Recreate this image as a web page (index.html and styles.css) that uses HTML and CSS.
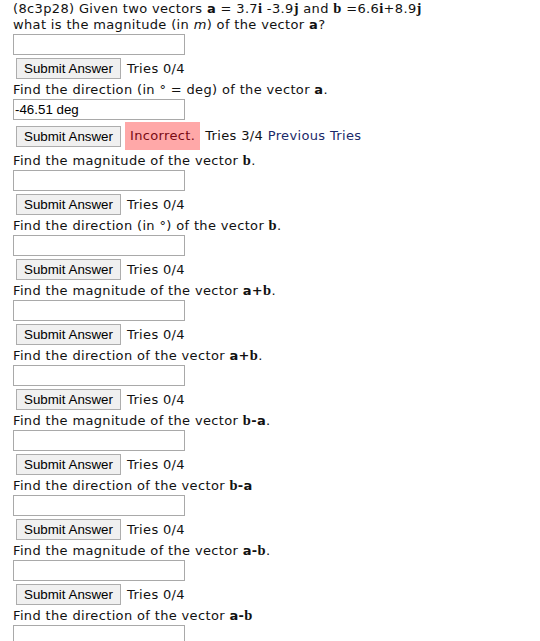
FILE: index.html
```html
<!DOCTYPE html>
<html>
<head>
<meta charset="utf-8">
<link rel="stylesheet" href="styles.css">
</head>
<body>
<div class="page">
  <div class="block">
    <p class="q">(8c3p28) Given two vectors <b class="sa">a</b> = 3.7<b class="sr">i</b> -3.9<b class="sr">j</b> and <b class="sr">b</b> =6.6<b class="sr">i</b>+8.9<b class="sr">j</b></p>
    <p class="q">what is the magnitude (in <i>m</i>) of the vector <b class="sa">a</b>?</p>
    <div class="field"></div>
    <div class="row"><span class="btn">Submit Answer</span><span class="tries">Tries 0/4</span></div>
  </div>
  <div class="block">
    <p class="q">Find the direction (in ° = deg) of the vector <b class="sa">a</b>.</p>
    <div class="field">-46.51 deg</div>
    <div class="row row-bad"><span class="btn">Submit Answer</span><span class="bad">Incorrect.</span><span class="tries tries-after">Tries 3/4 <span class="prev">Previous Tries</span></span></div>
  </div>
  <div class="block">
    <p class="q">Find the magnitude of the vector <b class="sr">b</b>.</p>
    <div class="field"></div>
    <div class="row"><span class="btn">Submit Answer</span><span class="tries">Tries 0/4</span></div>
  </div>
  <div class="block">
    <p class="q">Find the direction (in °) of the vector <b class="sr">b</b>.</p>
    <div class="field"></div>
    <div class="row"><span class="btn">Submit Answer</span><span class="tries">Tries 0/4</span></div>
  </div>
  <div class="block">
    <p class="q">Find the magnitude of the vector <b class="sa">a</b><b class="sa">+</b><b class="sr">b</b>.</p>
    <div class="field"></div>
    <div class="row"><span class="btn">Submit Answer</span><span class="tries">Tries 0/4</span></div>
  </div>
  <div class="block">
    <p class="q">Find the direction of the vector <b class="sa">a</b><b class="sa">+</b><b class="sr">b</b>.</p>
    <div class="field"></div>
    <div class="row"><span class="btn">Submit Answer</span><span class="tries">Tries 0/4</span></div>
  </div>
  <div class="block">
    <p class="q">Find the magnitude of the vector <b class="sr">b</b><b class="sa">-</b><b class="sa">a</b>.</p>
    <div class="field"></div>
    <div class="row"><span class="btn">Submit Answer</span><span class="tries">Tries 0/4</span></div>
  </div>
  <div class="block">
    <p class="q">Find the direction of the vector <b class="sr">b</b><b class="sa">-</b><b class="sa">a</b></p>
    <div class="field"></div>
    <div class="row"><span class="btn">Submit Answer</span><span class="tries">Tries 0/4</span></div>
  </div>
  <div class="block">
    <p class="q">Find the magnitude of the vector <b class="sa">a</b><b class="sa">-</b><b class="sr">b</b>.</p>
    <div class="field"></div>
    <div class="row"><span class="btn">Submit Answer</span><span class="tries">Tries 0/4</span></div>
  </div>
  <div class="block">
    <p class="q">Find the direction of the vector <b class="sa">a</b><b class="sa">-</b><b class="sr">b</b></p>
    <div class="field"></div>
  </div>
</div>
</body>
</html>
```
FILE: styles.css
```css
html, body {
  margin: 0;
  padding: 0;
  background: #ffffff;
}
.page {
  padding: 1px 0 0 13px;
  font-family: "DejaVu Sans", Verdana, sans-serif;
  font-size: 13px;
  line-height: 16px;
  color: #111;
}
.q {
  margin: 0;
  height: 16px;
  white-space: nowrap;
  letter-spacing: 0.35px;
}
.sa {
  font-weight: bold;
}
.sr {
  font-family: "Liberation Serif", serif;
  font-weight: bold;
  font-size: 14.5px;
  line-height: 0;
}
.field {
  box-sizing: border-box;
  width: 172px;
  height: 21px;
  margin-top: 1px;
  border: 1px solid #a9a9a9;
  font-family: "Liberation Sans", Arial, sans-serif;
  font-size: 13.33px;
  line-height: 19px;
  padding-left: 1px;
  color: #000;
}
.row {
  display: flex;
  align-items: center;
  height: 21px;
  margin: 3px 0 3px 3px;
  white-space: nowrap;
}
.row-bad {
  height: 28px;
  margin: 2px 0 3px 3px;
}
.btn {
  box-sizing: border-box;
  height: 21px;
  width: 105px;
  border: 1px solid #adadad;
  background: #f0f0f0;
  font-family: "Liberation Sans", Arial, sans-serif;
  font-size: 13.33px;
  line-height: 19px;
  text-align: center;
  color: #000;
}
.tries {
  margin-left: 6px;
  letter-spacing: 0.35px;
}
.bad {
  margin-left: 4px;
  height: 28px;
  line-height: 28px;
  padding: 0 5px;
  background: #ffa8a8;
  color: #7a0a14;
  letter-spacing: 0.35px;
}
.tries-after {
  margin-left: 5px;
}
.prev {
  color: #1a2a6a;
}
```
